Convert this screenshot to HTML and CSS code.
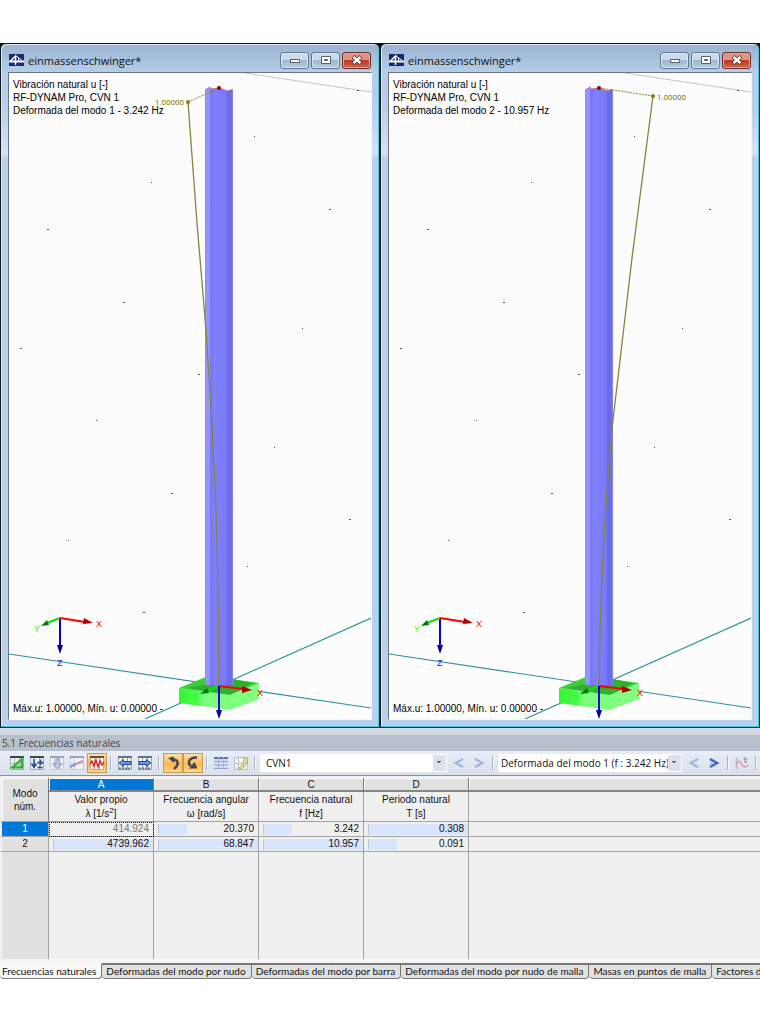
FILE: index.html
```html
<!DOCTYPE html>
<html lang="es">
<head>
    <meta charset="UTF-8">
    <meta name="viewport" content="width=device-width, initial-scale=1.0">
    <title>Frecuencias naturales</title>
    <link rel="stylesheet" href="styles.css">
</head>
<body>

    <!-- Model windows -->
    <main class="windows">
        <section class="window">
            <header class="titlebar">
                <svg class="logo" viewBox="0 0 15 12"><rect width="15" height="12" fill="#1d2a72"/><path d="M0 7.500H15" stroke="#fff" stroke-width="2"/><path d="M1.500 7L6.500 2V11" stroke="#fff" stroke-width="1.500" fill="none"/><path d="M7 2L13 6.500M9.500 4V7" stroke="#fff" fill="none"/></svg>
                <h1>einmassenschwinger*</h1>
                <button class="win-btn" aria-label="Minimizar"><svg viewBox="0 0 12 10"><rect x="1.500" y="4.500" width="9" height="3" fill="#fff" stroke="#59636f"/></svg></button>
                <button class="win-btn" aria-label="Maximizar"><svg viewBox="0 0 12 10"><path d="M1.500 1.500h9v7h-9zM4.500 4.500h3v1h-3z" fill="#fff" stroke="#59636f"/></svg></button>
                <button class="win-btn close" aria-label="Cerrar"><svg viewBox="0 0 12 10"><path d="M2 1.500L10 8.500M10 1.500L2 8.500" stroke="#5b3434" stroke-width="4"/><path d="M2.500 2L9.500 8M9.500 2L2.500 8" stroke="#fff" stroke-width="2.400"/></svg></button>
            </header>
            <svg class="view" viewBox="0 0 362 646">
                <defs>
                    <linearGradient id="steel">
                        <stop offset="0" stop-color="#8080f0"/>
                        <stop offset=".04" stop-color="#9797ff"/>
                        <stop offset=".18" stop-color="#9090ff"/>
                        <stop offset=".2" stop-color="#7474ee"/>
                        <stop offset=".32" stop-color="#8080fa"/>
                        <stop offset=".75" stop-color="#7a7af8"/>
                        <stop offset=".82" stop-color="#6868e6"/>
                        <stop offset=".97" stop-color="#7070f0"/>
                        <stop offset="1" stop-color="#9a9aff"/>
                    </linearGradient>
                    <linearGradient id="footing">
                        <stop offset="0" stop-color="#35f535"/>
                        <stop offset=".35" stop-color="#48fa48"/>
                        <stop offset=".5" stop-color="#7dff7d"/>
                    </linearGradient>
                    <g id="model">
                        <path d="M236 0L362 19" stroke="#c4c4c4"/>
                        <path d="M0 581L362 635M136 646L362 545" stroke="#2e9494" stroke-width="1.200"/>
                        <g fill="#555">
                            <path d="M245 63h1v1h-1zM142 109h1v1h-1zM320 136h2v1h-2zM38 156h2v1h-2zM114 229h2v1h-2zM293 255h1v1h-1zM11 275h2v1h-2zM189 301h2v1h-2zM87 347h1v1h-1zM265 374h1v1h-1zM162 420h2v1h-2zM340 446h2v1h-2zM59 467h1v1h-1zM238 493h1v1h-1zM134 539h2v1h-2zM348 17h2v1h-2z"/>
                        </g>
                        <!-- footing -->
                        <path d="M170 615L221 622V637L170 630z" fill="url(#footing)"/>
                        <path d="M221 622L250 610V626L221 637z" fill="#80ff80"/>
                        <path d="M170 615L199 603L250 610L221 622z" fill="#3ccc3c"/>
                        <path d="M178 615L224 606L244 610L221 622z" fill="#239323" opacity=".5"/>
                        <!-- column -->
                        <path d="M196 17L201 14L202 16L210 15L219 18L223 16L224 17V612H196z" fill="url(#steel)"/>
                        <path d="M196 17L201 14L202 16L210 15L219 18L224 17" stroke="#c05080" fill="none" opacity=".7"/>
                        <path d="M210 613L196 619" stroke="#0ae00a" stroke-width="2"/>
                        <path d="M191 621L198 615L200 620z" fill="#087808"/>
                        <path d="M210 613L234 616" stroke="#f00" stroke-width="2"/>
                        <path d="M233 613L243 617L233 620z" fill="#b00000"/>
                        <path d="M210 613V638" stroke="#0000e8" stroke-width="2"/>
                        <path d="M207 637H213L210 646z" fill="#0000a0"/>
                        <text class="axis" x="248" y="623" fill="#f00">X</text>
                        <text class="axis" x="184" y="627" fill="#1aff1a">Y</text>
                        <!-- free axes -->
                        <path d="M51 545V573" stroke="#0000e8" stroke-width="2"/>
                        <path d="M48 572H54L51 581z" fill="#0000a0"/>
                        <path d="M51 545L38 550" stroke="#0ae00a" stroke-width="2"/>
                        <path d="M32 553L38 547L40 552z" fill="#087808"/>
                        <path d="M51 545L76 549" stroke="#f00" stroke-width="2"/>
                        <path d="M75 545L84 550L74 551z" fill="#b00000"/>
                        <text class="axis" x="87" y="554" fill="#f00">X</text>
                        <text class="axis" x="25" y="559" fill="#1aff1a">Y</text>
                        <text class="axis" x="48" y="593" fill="#22f">Z</text>
                    </g>
                </defs>
                <use href="#model"/>
                <path class="offset" d="M179 29L210 15"/>
                <path class="mode" d="M179 29L188 150L197 257C201 318 203 345 204 377C208 440 209 500 210 613"/>
                <circle cx="179" cy="29" r="2" fill="#808000"/>
                <circle cx="210" cy="15" r="2" fill="#900010"/>
                <text class="value" x="146" y="32">1.00000</text>
                <text x="4" y="15">Vibración natural u [-]</text>
                <text x="4" y="28">RF-DYNAM Pro, CVN 1</text>
                <text x="4" y="41">Deformada del modo 1 - 3.242 Hz</text>
                <text x="4" y="639">Máx.u: 1.00000, Mín. u: 0.00000 -</text>
            </svg>
        </section>

        <section class="window">
            <header class="titlebar">
                <svg class="logo" viewBox="0 0 15 12"><rect width="15" height="12" fill="#1d2a72"/><path d="M0 7.500H15" stroke="#fff" stroke-width="2"/><path d="M1.500 7L6.500 2V11" stroke="#fff" stroke-width="1.500" fill="none"/><path d="M7 2L13 6.500M9.500 4V7" stroke="#fff" fill="none"/></svg>
                <h1>einmassenschwinger*</h1>
                <button class="win-btn" aria-label="Minimizar"><svg viewBox="0 0 12 10"><rect x="1.500" y="4.500" width="9" height="3" fill="#fff" stroke="#59636f"/></svg></button>
                <button class="win-btn" aria-label="Maximizar"><svg viewBox="0 0 12 10"><path d="M1.500 1.500h9v7h-9zM4.500 4.500h3v1h-3z" fill="#fff" stroke="#59636f"/></svg></button>
                <button class="win-btn close" aria-label="Cerrar"><svg viewBox="0 0 12 10"><path d="M2 1.500L10 8.500M10 1.500L2 8.500" stroke="#5b3434" stroke-width="4"/><path d="M2.500 2L9.500 8M9.500 2L2.500 8" stroke="#fff" stroke-width="2.400"/></svg></button>
            </header>
            <svg class="view" viewBox="0 0 362 646">
                <use href="#model"/>
                <path class="offset" d="M264 23L210 15"/>
                <path class="mode" d="M264 23L243 185L224 347C216 430 211 520 210 613"/>
                <circle cx="264" cy="23" r="2" fill="#808000"/>
                <circle cx="210" cy="15" r="2" fill="#900010"/>
                <text class="value" x="268" y="27">1.00000</text>
                <text x="4" y="15">Vibración natural u [-]</text>
                <text x="4" y="28">RF-DYNAM Pro, CVN 1</text>
                <text x="4" y="41">Deformada del modo 2 - 10.957 Hz</text>
                <text x="4" y="639">Máx.u: 1.00000, Mín. u: 0.00000 -</text>
            </svg>
        </section>
    </main>

    <!-- Results panel -->
    <section class="panel">
        <h2>5.1 Frecuencias naturales</h2>

        <div class="toolbar">
            <button aria-label="Editar tabla"><svg viewBox="0 0 16 16"><path d="M1.500 1.500h13v13h-13zM1 8.500h14M5.500 1v14M10.500 1v14" fill="#eef2f4" stroke="#a3adb8"/><path d="M1 1h14v2H1z" fill="#3c4450"/><path d="M3 12.500L13 4V12.500z" fill="#8fe08f" stroke="#3aa83f" stroke-width="2"/></svg></button>
            <button aria-label="Insertar fila"><svg viewBox="0 0 16 16"><path d="M1.500 1.500h13v13h-13zM1 8.500h14M5.500 1v14M10.500 1v14" fill="#eef2f4" stroke="#a3adb8"/><path d="M1 1h14v2H1z" fill="#3c4450"/><path d="M5 4v8M2.500 9L5 12L7.500 9M8.500 7.500h6M11.500 4.500v6M8.500 12.500h5" stroke="#23458c" stroke-width="1.500" fill="none"/></svg></button>
            <button aria-label="Mover abajo"><svg viewBox="0 0 16 16"><path d="M1.500 1.500h13v13h-13zM1 8.500h14M5.500 1v14M10.500 1v14" fill="#eef2f6" stroke="#c4ccd6"/><path d="M1 1h14v2H1z" fill="#9ba3b0"/><path d="M7 4h3v5h3L8.500 14L4 9h3z" fill="#c2cfe8" stroke="#8496c0"/></svg></button>
            <button aria-label="Diagrama"><svg viewBox="0 0 16 16"><path d="M1.500 1.500h13v13h-13zM1 8.500h14M5.500 1v14" fill="#eef2f6" stroke="#c4ccd6"/><path d="M1 1h14v2H1z" fill="#9ba3b0"/><path d="M1 12L7 9" stroke="#7d90d0" stroke-width="2"/><path d="M7 9L14 6" stroke="#d98b98" stroke-width="2"/></svg></button>
            <button class="on" aria-label="Resultados"><svg viewBox="0 0 16 16"><path d="M1.500 1.500h13v13h-13zM5.500 1v14M10.500 1v14" fill="#fff" stroke="#c8a47c"/><path d="M1 1h14v2H1z" fill="#6b5138"/><path d="M1 9L3 6L5 11L7 5L9 12L11 6L13 10L15 7" stroke="#e02828" stroke-width="1.500" fill="none"/></svg></button>
            <span class="sep"></span>
            <button aria-label="Columna anterior"><svg viewBox="0 0 16 16"><path d="M1.500 1.500h13v13h-13zM5.500 1v14M10.500 1v14" fill="#eef2f6" stroke="#98a2b0"/><path d="M1 1h14v2H1z" fill="#657080"/><path d="M2 13.500h12" stroke="#657080" stroke-width="2" stroke-dasharray="2 1"/><path d="M2 8L6.500 4.500V6.500H14V9.500H6.500V11.500z" fill="#6b93e8" stroke="#24479a"/></svg></button>
            <button aria-label="Columna siguiente"><svg viewBox="0 0 16 16"><path d="M1.500 1.500h13v13h-13zM5.500 1v14M10.500 1v14" fill="#eef2f6" stroke="#98a2b0"/><path d="M1 1h14v2H1z" fill="#657080"/><path d="M2 13.500h12" stroke="#657080" stroke-width="2" stroke-dasharray="2 1"/><path d="M14 8L9.500 4.500V6.500H2V9.500H9.500V11.500z" fill="#6b93e8" stroke="#24479a"/></svg></button>
            <span class="sep"></span>
            <button class="on" aria-label="Deshacer selección"><svg viewBox="0 0 16 16"><path d="M7 4.500C13 4 15 9 9 14" stroke="#414752" stroke-width="2.500" fill="none"/><path d="M3 3L9 1.500V8z" fill="#414752"/></svg></button>
            <button class="on" aria-label="Sincronizar selección"><svg viewBox="0 0 16 16"><path d="M12 2.500C4 2 2 8 6 11" stroke="#414752" stroke-width="2.500" fill="none"/><path d="M12.500 13.500L4 13.500L9.500 7z" fill="#414752"/></svg></button>
            <span class="sep"></span>
            <button aria-label="Tabla"><svg viewBox="0 0 16 16"><path d="M1 2h14v12H1z" fill="#d7def2"/><path d="M1 3h14" stroke="#5d6da8" stroke-width="2"/><path d="M1 6.500h14M1 10h14M1 13.500h14" stroke="#8f9fd0"/><path d="M5.500 2v12M10.500 2v12" stroke="#a9b5dc"/></svg></button>
            <button aria-label="Editar comentario"><svg viewBox="0 0 16 16"><path d="M1.500 2.500h13v12h-13zM1 8.500h14M5.500 2v12" fill="#f0f2f4" stroke="#b7bec8"/><path d="M5 13.500L10 10L11 2L15 4L12 11L8 14z" fill="#e7e1a0" stroke="#b3ac70"/></svg></button>
            <span class="sep"></span>
            <select aria-label="Caso de vibración"><option>CVN1</option></select>
            <button class="step off" aria-label="Caso anterior"><svg viewBox="0 0 16 16"><path d="M12 4L4.500 8L12 12"/></svg></button>
            <button class="step off" aria-label="Caso siguiente"><svg viewBox="0 0 16 16"><path d="M4 4L11.500 8L4 12"/></svg></button>
            <span class="sep"></span>
            <select class="mode-select" aria-label="Modo"><option>Deformada del modo 1 (f : 3.242 Hz)</option></select>
            <button class="step off" aria-label="Modo anterior"><svg viewBox="0 0 16 16"><path d="M12 4L4.500 8L12 12"/></svg></button>
            <button class="step" aria-label="Modo siguiente"><svg viewBox="0 0 16 16"><path d="M4 4L11.500 8L4 12"/></svg></button>
            <span class="sep"></span>
            <button aria-label="Diagrama temporal"><svg viewBox="0 0 16 16"><path d="M2.500 3v11" stroke="#b5bac4" stroke-width="1.500"/><path d="M2 10C5 4 6 6 8 10C10 13 12 12 14 10" stroke="#e39aa0" stroke-width="1.600" fill="none"/><path d="M11 2v5h2M9.500 4h4" stroke="#9aa4b2" stroke-width="1.300" fill="none"/></svg></button>
            <span class="sep"></span>
        </div>

        <table>
            <colgroup>
                <col class="col-mode"><col class="col-data"><col class="col-data"><col class="col-data"><col class="col-data"><col>
            </colgroup>
            <thead>
                <tr class="letters">
                    <th rowspan="2" class="corner">Modo<br>núm.</th>
                    <th class="selected">A</th>
                    <th>B</th>
                    <th>C</th>
                    <th>D</th>
                    <th></th>
                </tr>
                <tr class="names">
                    <th>Valor propio<br>λ [1/s<sup>2</sup>]</th>
                    <th>Frecuencia angular<br>ω [rad/s]</th>
                    <th>Frecuencia natural<br>f [Hz]</th>
                    <th>Periodo natural<br>T [s]</th>
                    <th></th>
                </tr>
            </thead>
            <tbody>
                <tr>
                    <th class="selected">1</th>
                    <td class="current">414.924</td>
                    <td class="bar" style="--fill: 27%">20.370</td>
                    <td class="bar" style="--fill: 27%">3.242</td>
                    <td class="bar" style="--fill: 100%">0.308</td>
                    <td></td>
                </tr>
                <tr>
                    <th>2</th>
                    <td class="bar" style="--fill: 100%">4739.962</td>
                    <td class="bar" style="--fill: 100%">68.847</td>
                    <td class="bar" style="--fill: 100%">10.957</td>
                    <td class="bar" style="--fill: 27%">0.091</td>
                    <td></td>
                </tr>
                <tr class="empty"><th></th><td></td><td></td><td></td><td></td><td></td></tr>
            </tbody>
        </table>

        <nav class="tabs">
            <button class="active">Frecuencias naturales</button>
            <button>Deformadas del modo por nudo</button>
            <button>Deformadas del modo por barra</button>
            <button>Deformadas del modo por nudo de malla</button>
            <button>Masas en puntos de malla</button>
            <button>Factores de masa</button>
        </nav>
    </section>

</body>
</html>
```
FILE: styles.css
```css
* {
    box-sizing: border-box;
}

body {
    margin: 0;
    padding-top: 43px;
    background: #fff;
    color: #111;
    font-family: "Liberation Sans", Arial, sans-serif;
    font-size: 10px;
    overflow-x: hidden;
}

button {
    margin: 0;
    padding: 0;
    border: 0;
    background: none;
    color: inherit;
    font: inherit;
}

/* Model windows */
.windows {
    display: grid;
    grid-template-columns: 1fr 1fr;
    background: #111;
}

.window {
    padding: 0 7px 7px;
    border: 1px solid #15181c;
    border-radius: 6px 6px 0 0;
    background: linear-gradient(#9ab4cf, #b4cde8 28px, #b7cfe9 60px, #d3e3f4 110px, #b9d1ea 114px);
    box-shadow: inset -1px -1px 0 #3fcbe8, inset 1px 1px 0 #dce9f5;
}

.titlebar {
    display: flex;
    align-items: center;
    gap: 2px;
    height: 28px;
    padding: 4px 1px 0;
}

.titlebar h1 {
    flex: 1;
    margin: 0 0 0 2px;
    font-family: "Open Sans", "Noto Sans", sans-serif;
    font-size: 11px;
    font-weight: 400;
}

.logo {
    width: 15px;
    height: 12px;
}

.win-btn {
    display: grid;
    place-items: center;
    width: 29px;
    height: 17px;
    border: 1px solid #63788f;
    border-radius: 3px;
    background: linear-gradient(#c9daea 45%, #9eb6cf 50%, #b8cfe5);
    box-shadow: inset 0 0 0 1px #d9e6f2;
}

.win-btn svg {
    width: 12px;
    height: 10px;
}

.win-btn.close {
    border-color: #6b2d28;
    background: linear-gradient(#dd9586 45%, #bd3a25 50%, #cf6a50);
    box-shadow: inset 0 0 0 1px #e3a596;
}

.view {
    display: block;
    width: 100%;
    border: 1px solid #f4f7fa;
    border-top-color: #6d747b;
    border-left-color: #6d747b;
    background: #fcfcfc;
}

.view text {
    font-size: 10px;
}

.view .value {
    fill: #808000;
    font-family: Roboto, sans-serif;
    font-size: 8px;
}

.view .axis {
    font-size: 9px;
}

.mode {
    fill: none;
    stroke: #85853a;
    stroke-width: 1.3;
}

.offset {
    stroke: #8c8c30;
    stroke-dasharray: 2 1;
}

/* Results panel */
.panel {
    border-top: 7px solid #d3dae4;
    overflow: hidden;
}

.panel h2 {
    margin: 0;
    padding-left: 2px;
    background: #b8c0cb;
    color: #41464d;
    font-family: "Open Sans", "Noto Sans", sans-serif;
    font-size: 10px;
    font-weight: 400;
    line-height: 16px;
}

.toolbar {
    display: flex;
    align-items: center;
    height: 25px;
    padding-left: 7px;
    border-bottom: 1px solid #8b9097;
    background: linear-gradient(#e8eef7, #d9e0ea);
}

.toolbar button {
    display: grid;
    flex: none;
    place-items: center;
    width: 20px;
    height: 20px;
}

.toolbar svg {
    width: 16px;
    height: 16px;
}

.toolbar .on {
    border: 1px solid #c69a55;
    background: linear-gradient(#fde0a8, #fcb64c 60%, #fdd98c);
}

.sep {
    flex: none;
    width: 2px;
    height: 14px;
    margin: 0 3px;
    border-left: 1px solid #a9b2bf;
    border-right: 1px solid #f7f9fc;
}

.toolbar select {
    flex: 1;
    min-width: 0;
    height: 18px;
    margin: 0 2px 0 1px;
    padding: 0 14px 0 6px;
    border: 0;
    appearance: none;
    background:
        conic-gradient(from 315deg at 50% 100%, #59616c 90deg, transparent 0) right 5px top 7px / 6px 3px no-repeat,
        linear-gradient(#dbe1ea, #dbe1ea) right 1px center / 13px 16px no-repeat,
        #fff;
    color: #111;
    font-family: "Open Sans", "Noto Sans", sans-serif;
    font-size: 10px;
}

.toolbar .mode-select {
    padding-left: 3px;
}

.step path {
    fill: #b9cbf2;
    stroke: #3d66c4;
    stroke-width: 2;
}

.step.off path {
    fill: #dfe7f6;
    stroke: #9fb3de;
}

/* Table */
table {
    width: 100%;
    border-top: 2px solid #f0f0f0;
    border-collapse: separate;
    border-spacing: 0;
    table-layout: fixed;
    background: #f0f0f0;
}

.col-mode {
    width: 49px;
}

.col-data {
    width: 105px;
}

th,
td {
    height: 15px;
    padding: 0 4px;
    border-right: 1px solid #a3a3a3;
    border-bottom: 1px solid #a3a3a3;
    font-weight: 400;
    line-height: 14px;
    text-align: right;
}

th {
    background: #e1e1e1;
    text-align: center;
}

tr > :last-child {
    border-right: 0;
}

.letters th {
    height: 14px;
    border-right-color: #777;
    border-bottom: 2px solid #858585;
    line-height: 11px;
    box-shadow: inset 1px 1px 0 #fff;
}

.letters .corner {
    border-bottom: 1px solid #a3a3a3;
    line-height: 13px;
}

.names th {
    height: 30px;
    padding: 0;
    background: #f0f0f0;
    line-height: 14px;
}

tbody th,
.letters .corner {
    border-left: 2px solid #f0f0f0;
}

.letters .selected,
.selected {
    background: #0078d7;
    color: #fff;
}

sup {
    font-size: 8px;
    line-height: 0;
}

.current {
    color: #777;
    outline: 1px dotted #111;
    outline-offset: -1px;
}

/* Value bar behind the number, --fill is its share of the cell */
.bar {
    background:
        linear-gradient(#c4c8ce, #c4c8ce) 4px 2px / 1px 11px no-repeat,
        linear-gradient(#d9e4fd, #d9e4fd) 5px 2px / var(--fill) 11px no-repeat;
}

.empty th,
.empty td {
    height: 107px;
    border-bottom: 0;
}

/* Tabs */
.tabs {
    display: flex;
    margin-top: 4px;
    font-family: Lato, sans-serif;
    white-space: nowrap;
    box-shadow: 0 -4px 0 #f6f6f6;
}

.tabs button {
    flex: none;
    height: 16px;
    padding: 0 5px 1px 4px;
    border: 1px solid #777;
    border-left: 0;
    border-top-width: 2px;
    border-radius: 0 0 4px 4px;
    background: #e1e1e1;
}

.tabs .active {
    padding-left: 2px;
    border-top-color: #f8f8f8;
    background: #f8f8f8;
}
```
